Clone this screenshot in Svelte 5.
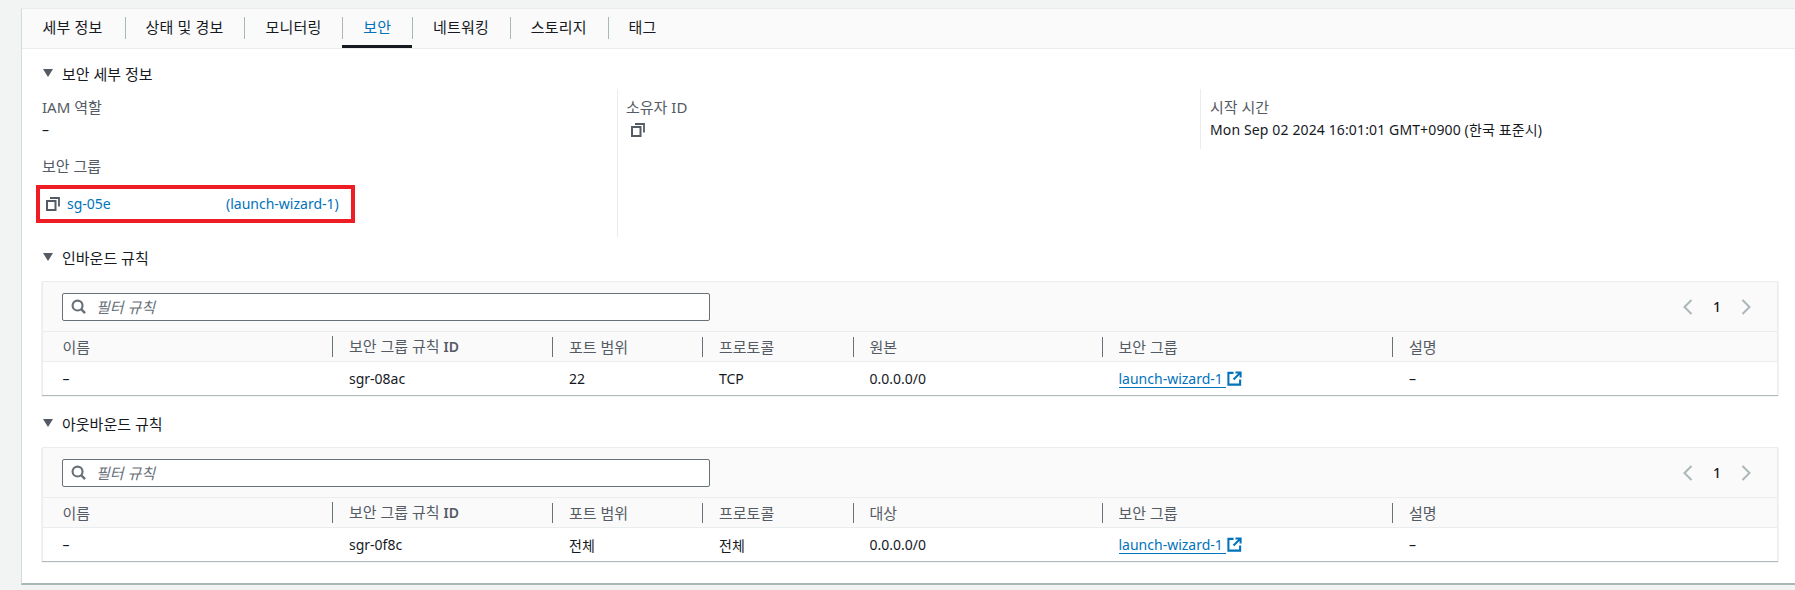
<script lang="ts">
  const tabs = ['세부 정보', '상태 및 경보', '모니터링', '보안', '네트워킹', '스토리지', '태그'];
  const activeTab = '보안';

  const inbound = {
    title: '인바운드 규칙',
    source: '원본',
    row: { id: 'sgr-08ac', port: '22', proto: 'TCP' }
  };
  const outbound = {
    title: '아웃바운드 규칙',
    source: '대상',
    row: { id: 'sgr-0f8c', port: '전체', proto: '전체' }
  };
</script>

{#snippet copyIcon()}
  <svg class="copy" viewBox="0 0 14 14" aria-hidden="true">
    <rect x="1" y="4" width="8.5" height="9" fill="none" stroke="#545b64" stroke-width="2" />
    <path d="M4 1h9v8.5" fill="none" stroke="#545b64" stroke-width="1.8" />
  </svg>
{/snippet}

{#snippet rules(section)}
  <h2 class="section-title"><span class="caret"></span>{section.title}</h2>
  <div class="rule-box">
    <div class="toolbar">
      <div class="filter">
        <svg class="search" viewBox="0 0 16 16" aria-hidden="true">
          <circle cx="7" cy="7" r="5.3" fill="none" stroke="#687078" stroke-width="2.3" />
          <path d="M10.8 10.8 15 15" stroke="#687078" stroke-width="2.6" />
        </svg>
        <span class="placeholder">필터 규칙</span>
      </div>
      <div class="pager">
        <svg viewBox="0 0 10 16" aria-hidden="true"><path d="M8.5 1 1.5 8l7 7" /></svg>
        <span>1</span>
        <svg viewBox="0 0 10 16" aria-hidden="true"><path d="M1.5 1l7 7-7 7" /></svg>
      </div>
    </div>
    <div class="table head">
      <div>이름</div>
      <div class="th">보안 그룹 규칙 <b>ID</b></div>
      <div class="th">포트 범위</div>
      <div class="th">프로토콜</div>
      <div class="th">{section.source}</div>
      <div class="th">보안 그룹</div>
      <div class="th">설명</div>
    </div>
    <div class="table body">
      <div>–</div>
      <div class="td">{section.row.id}</div>
      <div class="td">{section.row.port}</div>
      <div class="td">{section.row.proto}</div>
      <div class="td">0.0.0.0/0</div>
      <div class="td">
        <span class="ext-link">launch-wizard-1
          <svg viewBox="0 0 16 16" aria-hidden="true">
            <path d="M7 2H1.5v12.5H14V9" fill="none" stroke="#0073bb" stroke-width="2.2" />
            <path d="M9 1.5h5.5V7M14 2 7 9" fill="none" stroke="#0073bb" stroke-width="2.2" />
          </svg>
        </span>
      </div>
      <div class="td">–</div>
    </div>
  </div>
{/snippet}

<div class="page">
  <main class="panel">
    <nav class="tabs">
      {#each tabs as tab}
        <div class="tab" class:active={tab === activeTab}>{tab}</div>
      {/each}
    </nav>

    <div class="content">
      <h2 class="section-title"><span class="caret"></span>보안 세부 정보</h2>
      <div class="details">
        <div class="col">
          <div class="label">IAM 역할</div>
          <div class="value">–</div>
          <div class="label group-label">보안 그룹</div>
          <div class="group-box">
            {@render copyIcon()}
            <span class="sg-id">sg-05e</span>
            <span class="sg-name">(launch-wizard-1)</span>
          </div>
        </div>
        <div class="col">
          <div class="label">소유자 ID</div>
          <div class="value owner">{@render copyIcon()}</div>
        </div>
        <div class="col short">
          <div class="label">시작 시간</div>
          <div class="value date">Mon Sep 02 2024 16:01:01 GMT+0900 (한국 표준시)</div>
        </div>
      </div>

      {@render rules(inbound)}
      <div class="gap"></div>
      {@render rules(outbound)}
    </div>
  </main>
</div>

<style>
  :global(body) {
    margin: 0;
    background: #f2f3f3;
  }

  .page {
    width: 1795px;
    height: 590px;
    overflow: hidden;
    box-sizing: border-box;
    padding: 8px 0 0 21px;
    font-family: 'Noto Sans', 'Noto Sans CJK KR', sans-serif;
    font-size: 14px;
    color: #16191f;
  }

  .panel {
    height: 577px;
    box-sizing: border-box;
    background: #fff;
    border-top: 1px solid #eaeded;
    border-left: 1px solid #d5dbdb;
    border-bottom: 2px solid #aab7b8;
  }

  .tabs {
    display: flex;
    align-items: center;
    height: 39px;
    background: #fafafa;
    border-bottom: 1px solid #eaeded;
  }

  .tab {
    position: relative;
    height: 39px;
    box-sizing: border-box;
    padding: 0 20.9px;
    line-height: 37px;
    font-size: 15px;
    letter-spacing: 0.2px;
    color: #16191f;
    white-space: nowrap;
  }

  .tab:first-child {
    padding: 0 22px 0 20.4px;
  }

  .tab + .tab::before {
    content: '';
    position: absolute;
    left: 0;
    top: 8px;
    height: 22px;
    width: 1px;
    background: #aab7b8;
  }

  .tab.active {
    color: #0073bb;
    box-shadow: inset 0 -3px 0 #16191f;
  }

  .content {
    padding: 12px 17px 0 20px;
  }

  .section-title {
    display: flex;
    align-items: center;
    box-sizing: border-box;
    margin: 0;
    height: 28px;
    padding-bottom: 4px;
    font-size: 15px;
    font-weight: 400;
    color: #16191f;
  }

  .caret {
    width: 0;
    height: 0;
    margin: 0 9px 0 1px;
    border-left: 5px solid transparent;
    border-right: 5px solid transparent;
    border-top: 8px solid #545b64;
  }

  .details {
    display: grid;
    grid-template-columns: 575px 583px 1fr;
    height: 148px;
    margin-bottom: 8px;
  }

  .col {
    padding-top: 7px;
    line-height: 22px;
  }

  .col + .col {
    border-left: 1px solid #eaeded;
    padding-left: 8px;
  }

  .col.short {
    height: 53px;
    padding-left: 9px;
  }

  .label {
    color: #545b64;
    font-size: 15px;
  }

  .value {
    margin-top: 1px;
  }

  .date {
    letter-spacing: 0.13px;
  }

  .owner {
    padding-left: 5px;
    height: 22px;
    display: flex;
    align-items: center;
  }

  .group-label {
    margin-top: 14px;
  }

  .group-box {
    display: flex;
    align-items: center;
    width: 319px;
    height: 38px;
    box-sizing: border-box;
    margin: 8px 0 0 -6px;
    padding-left: 6px;
    border: 4px solid #ee1c25;
    color: #0073bb;
  }

  .copy {
    width: 14px;
    height: 14px;
    flex: none;
  }

  .sg-id {
    margin-left: 7px;
    width: 159px;
  }

  .rule-box {
    margin-top: 8px;
    border: 1px solid #eaeded;
    border-bottom: 0;
    box-shadow: 0 1px 1px rgba(0, 28, 36, 0.3);
  }

  .toolbar {
    display: flex;
    align-items: center;
    justify-content: space-between;
    height: 49px;
    padding: 0 26px 0 19px;
    background: #fafafa;
    border-bottom: 1px solid #eaeded;
  }

  .filter {
    display: flex;
    align-items: center;
    width: 648px;
    height: 28px;
    box-sizing: border-box;
    padding-left: 8px;
    background: #fff;
    border: 1px solid #687078;
    border-radius: 2px;
  }

  .search {
    width: 15px;
    height: 15px;
  }

  .placeholder {
    margin-left: 10px;
    color: #687078;
    font-size: 15px;
    font-style: italic;
  }

  .pager {
    display: flex;
    align-items: center;
    gap: 20px;
    font-weight: 500;
  }

  .pager svg {
    width: 10px;
    height: 16px;
    fill: none;
    stroke: #aab7b8;
    stroke-width: 2;
  }

  .table {
    display: grid;
    grid-template-columns: 289px 220px 150px 150.5px 249px 290.5px 1fr;
  }

  .table > div:first-child {
    padding-left: 19.5px;
  }

  .head {
    height: 29px;
    line-height: 20px;
    background: #fafafa;
    border-bottom: 1px solid #eaeded;
    color: #545b64;
    font-size: 15px;
    align-items: center;
  }

  .head b {
    font-size: 14px;
    font-weight: 600;
  }

  .th {
    border-left: 1px solid #687078;
    padding-left: 16px;
  }

  .body {
    height: 33px;
    align-items: center;
    background: #fff;
  }

  .td {
    padding-left: 17px;
  }

  .ext-link {
    display: inline-flex;
    align-items: center;
    gap: 4px;
    color: #0073bb;
    box-shadow: inset 0 -1px 0 #0073bb;
    width: 107px;
    white-space: nowrap;
  }

  .ext-link svg {
    width: 15px;
    height: 15px;
    flex: none;
  }

  .gap {
    height: 16px;
  }
</style>
